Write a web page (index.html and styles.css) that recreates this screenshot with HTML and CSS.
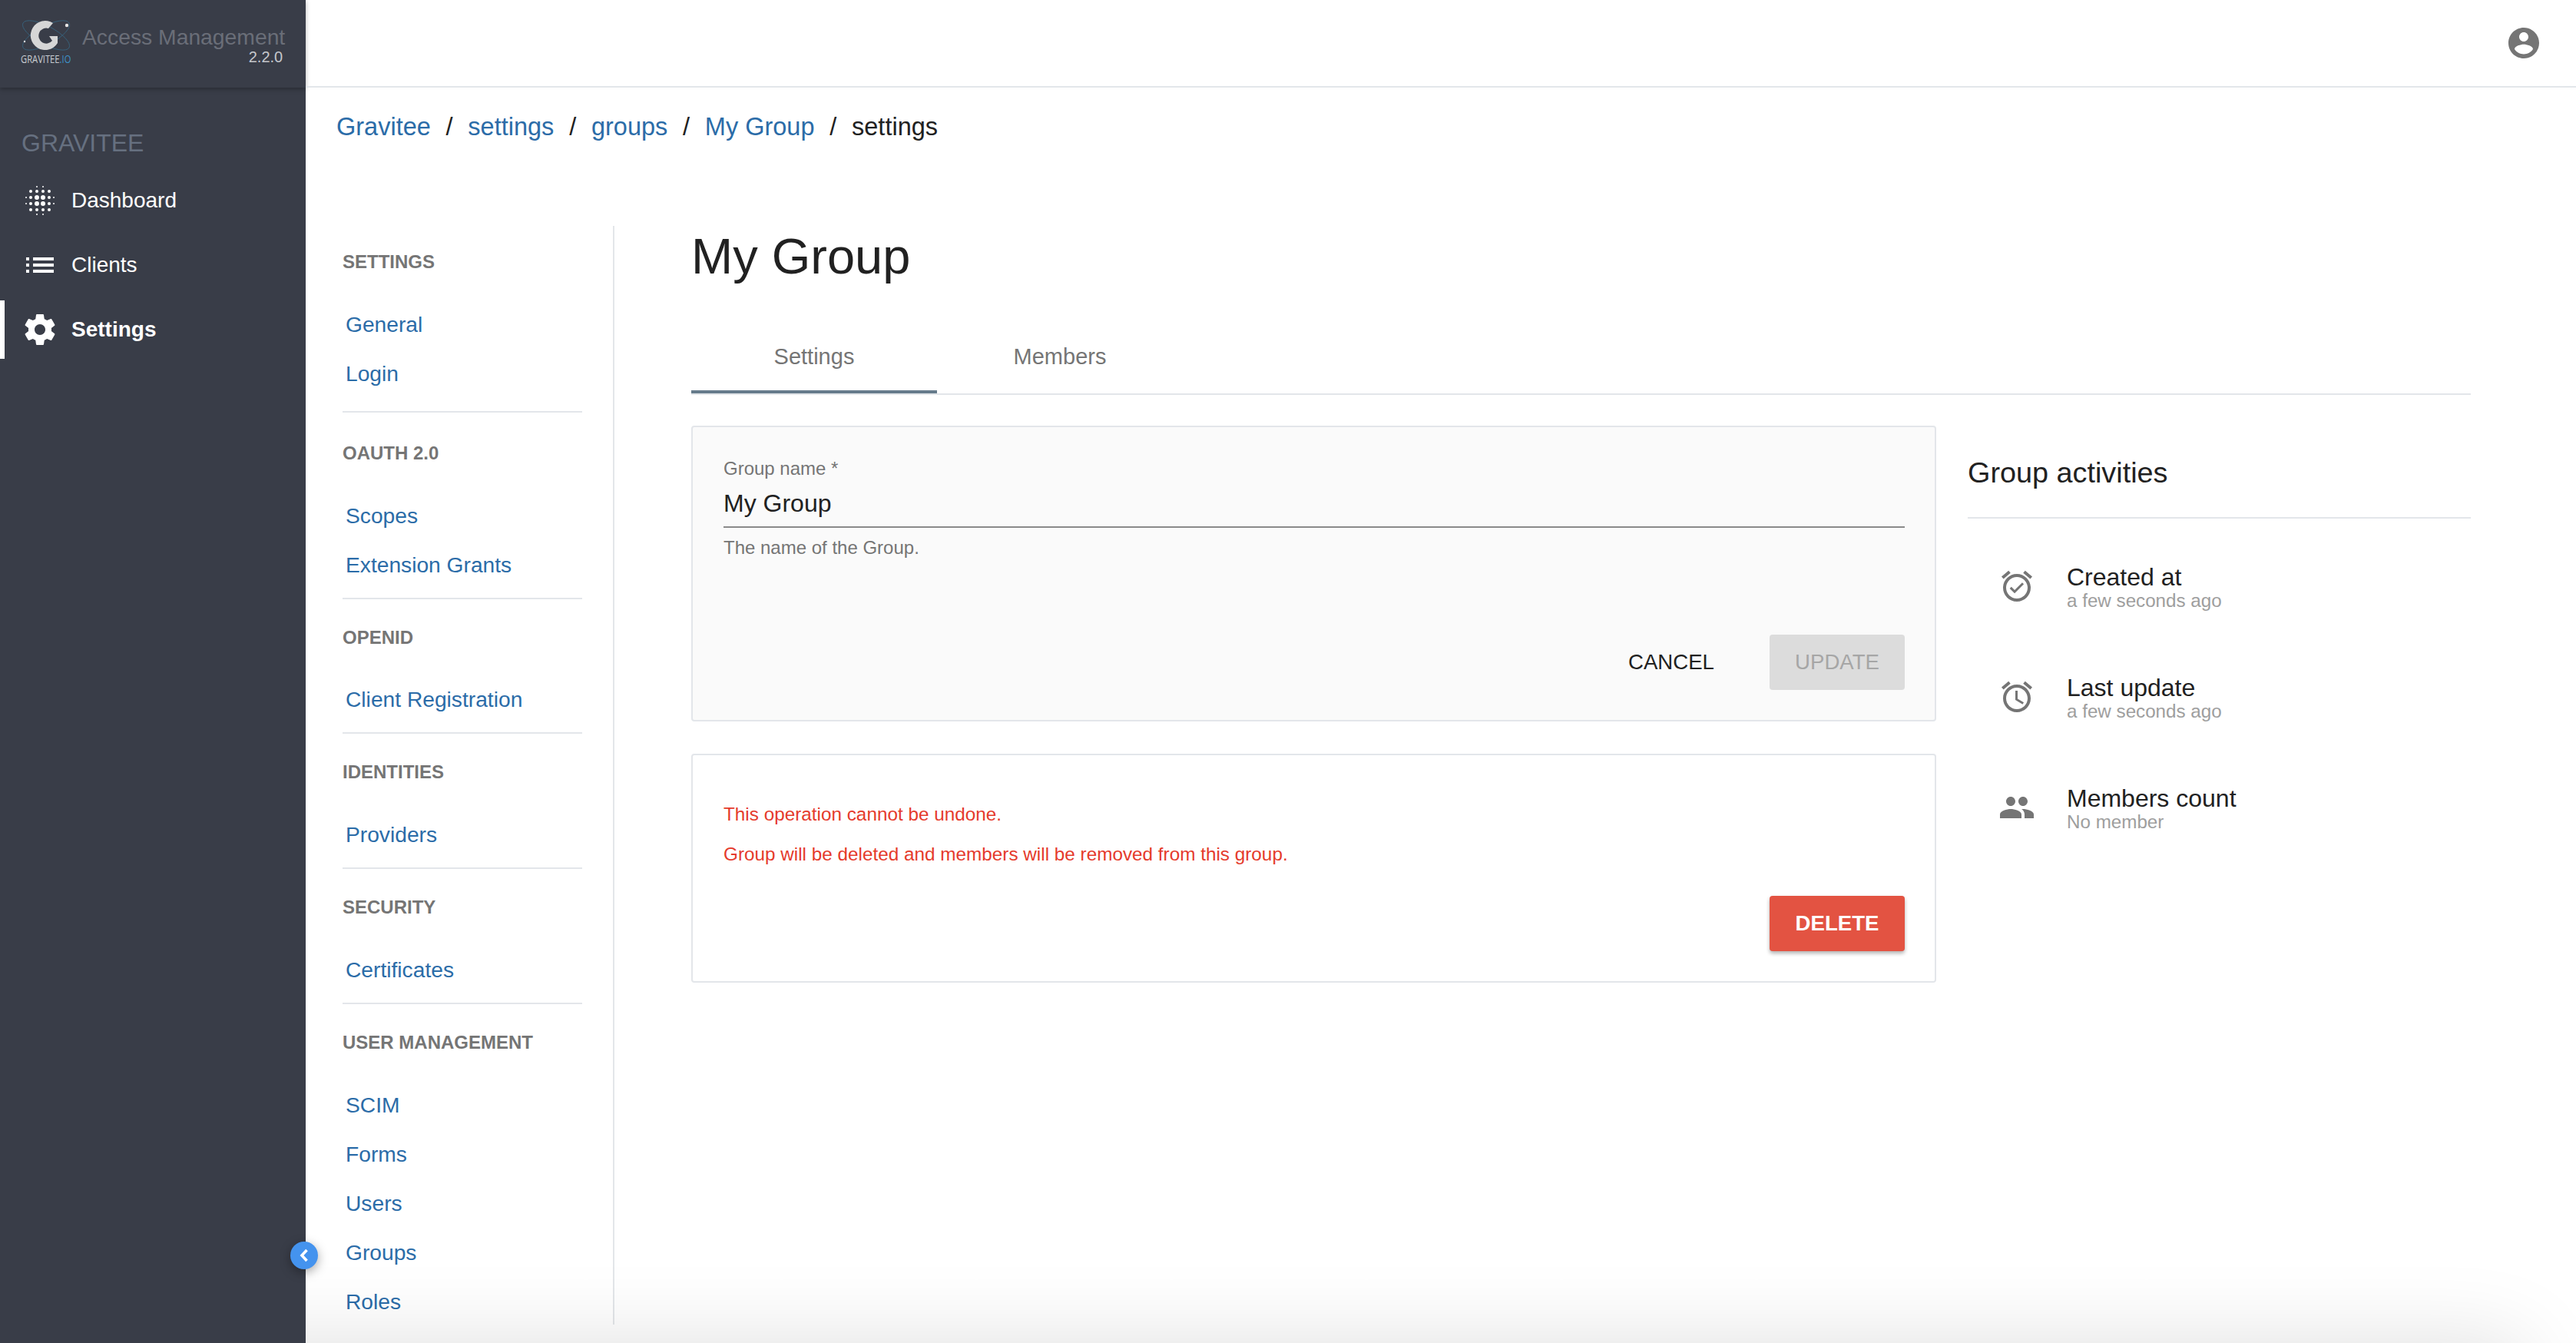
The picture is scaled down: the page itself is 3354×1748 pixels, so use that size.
FILE: index.html
```html
<!DOCTYPE html>
<html lang="en">
<head>
    <meta charset="UTF-8">
    <title>Access Management</title>
    <link rel="stylesheet" href="styles.css">
</head>
<body>
    <div class="layout">
        <div class="sidebar">
            <div class="brand">
                <div class="logo">
                    <svg class="logo-mark" viewBox="27 24 66 46" width="66" height="46">
                        <g fill="none" stroke="#37647f" stroke-width="0.8">
                            <ellipse cx="60" cy="46" rx="34" ry="12" transform="rotate(-28 60 46)"/>
                            <ellipse cx="60" cy="46" rx="34" ry="12" transform="rotate(28 60 46)"/>
                        </g>
                        <path fill="#d6d6d6" d="M69 30A19 19 0 1 0 75 56L75 47L64 47L68 53A10 10 0 1 1 63 37Z"/>
                        <circle cx="87" cy="33" r="2.2" fill="#e6e6e6"/>
                        <circle cx="32" cy="54" r="1.2" fill="#e6e6e6"/>
                    </svg>
                    <div class="logo-text">GRAVITEE<span class="logo-io">.IO</span></div>
                </div>
                <div class="product">
                    <div class="product-name">Access Management</div>
                    <div class="product-version">2.2.0</div>
                </div>
            </div>
            <div class="sidebar-title">GRAVITEE</div>
            <div class="side-nav">
                <a class="side-link" href="#">
                    <svg class="side-icon" viewBox="-4 -4 48 48" fill="#fff">
                        <circle cx="16" cy="2" r="1"/><circle cx="24" cy="2" r="1"/>
                        <circle cx="8" cy="8" r="2"/><circle cx="16" cy="8" r="2"/><circle cx="24" cy="8" r="2"/><circle cx="32" cy="8" r="2"/>
                        <circle cx="2" cy="16" r="1"/><circle cx="8" cy="16" r="2"/><circle cx="16" cy="16" r="3"/><circle cx="24" cy="16" r="3"/><circle cx="32" cy="16" r="2"/><circle cx="38" cy="16" r="1"/>
                        <circle cx="2" cy="24" r="1"/><circle cx="8" cy="24" r="2"/><circle cx="16" cy="24" r="3"/><circle cx="24" cy="24" r="3"/><circle cx="32" cy="24" r="2"/><circle cx="38" cy="24" r="1"/>
                        <circle cx="8" cy="32" r="2"/><circle cx="16" cy="32" r="2"/><circle cx="24" cy="32" r="2"/><circle cx="32" cy="32" r="2"/>
                        <circle cx="16" cy="38" r="1"/><circle cx="24" cy="38" r="1"/>
                    </svg>
                    Dashboard
                </a>
                <a class="side-link" href="#">
                    <svg class="side-icon" viewBox="-6 -14 48 48" fill="#fff">
                        <rect x="0" y="0" width="4" height="4"/><rect x="9" y="0" width="27" height="4"/>
                        <rect x="0" y="8" width="4" height="4"/><rect x="9" y="8" width="27" height="4"/>
                        <rect x="0" y="16" width="4" height="4"/><rect x="9" y="16" width="27" height="4"/>
                    </svg>
                    Clients
                </a>
                <a class="side-link side-link-active" href="#">
                    <svg class="side-icon" viewBox="0 0 24 24" fill="#fff"><path d="M19.43 12.98c.04-.32.07-.64.07-.98s-.03-.66-.07-.98l2.11-1.65c.19-.15.24-.42.12-.64l-2-3.46c-.12-.22-.39-.3-.61-.22l-2.49 1c-.52-.4-1.08-.73-1.69-.98l-.38-2.65C14.46 2.18 14.25 2 14 2h-4c-.25 0-.46.18-.49.42l-.38 2.65c-.61.25-1.17.59-1.69.98l-2.49-1c-.23-.09-.49 0-.61.22l-2 3.46c-.13.22-.07.49.12.64l2.11 1.65c-.04.32-.07.65-.07.98s.03.66.07.98l-2.11 1.65c-.19.15-.24.42-.12.64l2 3.46c.12.22.39.3.61.22l2.49-1c.52.4 1.08.73 1.69.98l.38 2.65c.03.24.24.42.49.42h4c.25 0 .46-.18.49-.42l.38-2.65c.61-.25 1.17-.59 1.69-.98l2.49 1c.23.09.49 0 .61-.22l2-3.46c.12-.22.07-.49-.12-.64l-2.11-1.65zM12 15.5c-1.93 0-3.5-1.57-3.5-3.5s1.57-3.5 3.5-3.5 3.5 1.57 3.5 3.5-1.57 3.5-3.5 3.5z"/></svg>
                    Settings
                </a>
            </div>
        </div>

        <div class="main">
            <div class="topbar">
                <svg class="account-icon" viewBox="0 0 24 24" fill="#757575"><path d="M12 2C6.48 2 2 6.48 2 12s4.48 10 10 10 10-4.48 10-10S17.52 2 12 2zm0 3c1.66 0 3 1.34 3 3s-1.34 3-3 3-3-1.34-3-3 1.34-3 3-3zm0 14.2c-2.5 0-4.71-1.28-6-3.22.03-1.99 4-3.08 6-3.08 1.99 0 5.97 1.09 6 3.08-1.29 1.94-3.5 3.22-6 3.22z"/></svg>
            </div>
            <div class="breadcrumb">
                <a href="#">Gravitee</a><span class="crumb-sep">/</span><a href="#">settings</a><span class="crumb-sep">/</span><a href="#">groups</a><span class="crumb-sep">/</span><a href="#">My Group</a><span class="crumb-sep">/</span><span>settings</span>
            </div>

            <div class="page">
                <div class="submenu">
                    <div class="submenu-section submenu-section-first">
                        <div class="submenu-title">SETTINGS</div>
                        <a class="submenu-link" href="#">General</a>
                        <a class="submenu-link" href="#">Login</a>
                    </div>
                    <div class="submenu-section">
                        <div class="submenu-title">OAUTH 2.0</div>
                        <a class="submenu-link" href="#">Scopes</a>
                        <a class="submenu-link" href="#">Extension Grants</a>
                    </div>
                    <div class="submenu-section">
                        <div class="submenu-title">OPENID</div>
                        <a class="submenu-link" href="#">Client Registration</a>
                    </div>
                    <div class="submenu-section">
                        <div class="submenu-title">IDENTITIES</div>
                        <a class="submenu-link" href="#">Providers</a>
                    </div>
                    <div class="submenu-section">
                        <div class="submenu-title">SECURITY</div>
                        <a class="submenu-link" href="#">Certificates</a>
                    </div>
                    <div class="submenu-section submenu-section-last">
                        <div class="submenu-title">USER MANAGEMENT</div>
                        <a class="submenu-link" href="#">SCIM</a>
                        <a class="submenu-link" href="#">Forms</a>
                        <a class="submenu-link" href="#">Users</a>
                        <a class="submenu-link" href="#">Groups</a>
                        <a class="submenu-link" href="#">Roles</a>
                    </div>
                </div>

                <div class="content">
                    <h1 class="page-title">My Group</h1>
                    <div class="tabs">
                        <a class="tab tab-active" href="#">Settings</a>
                        <a class="tab" href="#">Members</a>
                    </div>
                    <div class="columns">
                        <div class="cards">
                            <div class="card card-form">
                                <div class="field-label">Group name *</div>
                                <div class="field-value">My Group</div>
                                <div class="field-hint">The name of the Group.</div>
                                <div class="actions">
                                    <button class="btn btn-text">CANCEL</button>
                                    <button class="btn btn-disabled">UPDATE</button>
                                </div>
                            </div>
                            <div class="card card-danger">
                                <p class="danger-text">This operation cannot be undone.</p>
                                <p class="danger-text">Group will be deleted and members will be removed from this group.</p>
                                <div class="actions actions-danger">
                                    <button class="btn btn-delete">DELETE</button>
                                </div>
                            </div>
                        </div>

                        <div class="activities">
                            <div class="activities-title">Group activities</div>
                            <div class="activity">
                                <svg class="activity-icon" viewBox="0 0 24 24" fill="#757575"><path d="M22 5.72l-4.6-3.86-1.29 1.53 4.6 3.86L22 5.72zM7.88 3.39L6.6 1.86 2 5.71l1.29 1.53 4.59-3.85zM12 4c-4.97 0-9 4.03-9 9s4.02 9 9 9c4.97 0 9-4.03 9-9s-4.03-9-9-9zm0 16c-3.86 0-7-3.14-7-7s3.14-7 7-7 7 3.14 7 7-3.14 7-7 7zm-1.46-5.47L8.41 12.4l-1.06 1.06 3.18 3.18 6-6-1.06-1.06-4.93 4.95z"/></svg>
                                <div>
                                    <div class="activity-name">Created at</div>
                                    <div class="activity-sub">a few seconds ago</div>
                                </div>
                            </div>
                            <div class="activity">
                                <svg class="activity-icon" viewBox="0 0 24 24" fill="#757575"><path d="M22 5.72l-4.6-3.86-1.29 1.53 4.6 3.86L22 5.72zM7.88 3.39L6.6 1.86 2 5.71l1.29 1.53 4.59-3.85zM12.5 8H11v6l4.75 2.85.75-1.23-4-2.37V8zM12 4c-4.97 0-9 4.03-9 9s4.02 9 9 9c4.97 0 9-4.03 9-9s-4.03-9-9-9zm0 16c-3.87 0-7-3.13-7-7s3.13-7 7-7 7 3.13 7 7-3.13 7-7 7z"/></svg>
                                <div>
                                    <div class="activity-name">Last update</div>
                                    <div class="activity-sub">a few seconds ago</div>
                                </div>
                            </div>
                            <div class="activity">
                                <svg class="activity-icon" viewBox="0 0 24 24" fill="#757575"><path d="M16 11c1.66 0 2.99-1.34 2.99-3S17.66 5 16 5c-1.66 0-3 1.34-3 3s1.34 3 3 3zm-8 0c1.66 0 2.99-1.34 2.99-3S9.66 5 8 5C6.34 5 5 6.34 5 8s1.34 3 3 3zm0 2c-2.33 0-7 1.17-7 3.5V19h14v-2.5c0-2.33-4.67-3.5-7-3.5zm8 0c-.29 0-.62.02-.97.05 1.16.84 1.97 1.97 1.97 3.45V19h6v-2.5c0-2.33-4.67-3.5-7-3.5z"/></svg>
                                <div>
                                    <div class="activity-name">Members count</div>
                                    <div class="activity-sub">No member</div>
                                </div>
                            </div>
                        </div>
                    </div>
                </div>
            </div>
            <div class="bottom-shadow"></div>
        </div>

        <button class="collapse-btn">
            <svg class="collapse-icon" viewBox="0 0 14 18"><path d="M10.5 2L4 9L10.5 16" fill="none" stroke="#fff" stroke-width="3.6"/></svg>
        </button>
    </div>
</body>
</html>
```

FILE: styles.css
```css
body {
    margin: 0;
    padding: 0;
    font-family: "Liberation Sans", Arial, Helvetica, sans-serif;
    color: #212121;
    background-color: #ffffff;
    overflow: hidden;
}
a {
    color: #2b6ca8;
    text-decoration: none;
}
.layout {
    position: relative;
    display: flex;
    height: 100vh;
    overflow: hidden;
}

/* left sidebar */
.sidebar {
    position: relative;
    width: 398px;
    flex-shrink: 0;
    background-color: #393d48;
}
.brand {
    position: relative;
    display: flex;
    box-sizing: border-box;
    height: 114px;
    padding: 24px 27px 0 27px;
    box-shadow: 0 2px 6px rgba(0,0,0,0.3);
}
.logo {
    width: 66px;
    margin-right: 14px;
}
.logo-mark {
    display: block;
}
.logo-text {
    margin-top: 0;
    font-family: "Open Sans", sans-serif;
    font-size: 14px;
    line-height: 14px;
    color: #c9cdd2;
    white-space: nowrap;
    transform: scaleX(0.8);
    transform-origin: left center;
}
.logo-io {
    color: #3d92c9;
}
.product {
    width: 266px;
    padding-top: 7px;
    text-align: right;
}
.product-name {
    font-size: 28.3px;
    line-height: 34px;
    color: #6a6e78;
    white-space: nowrap;
}
.product-version {
    margin-top: -3px;
    padding-right: 3px;
    font-size: 20px;
    line-height: 24px;
    color: #c5c7cc;
}
.sidebar-title {
    margin-top: 52px;
    padding-left: 28px;
    font-size: 32px;
    line-height: 40px;
    color: #667080;
}
.side-nav {
    display: flex;
    flex-direction: column;
    gap: 8px;
    margin-top: 17px;
}
.side-link {
    display: flex;
    align-items: center;
    gap: 17px;
    height: 76px;
    padding-left: 28px;
    font-size: 28px;
    color: #ffffff;
}
.side-link-active {
    font-weight: bold;
    box-shadow: inset 6px 0 0 #ffffff;
}
.side-icon {
    width: 48px;
    height: 48px;
}
.collapse-btn {
    position: absolute;
    left: 378px;
    top: 1616px;
    display: flex;
    align-items: center;
    justify-content: center;
    width: 36px;
    height: 36px;
    padding: 0;
    border: 0;
    border-radius: 50%;
    background-color: #4493ee;
    box-shadow: 0 4px 14px rgba(0,0,0,0.35);
}
.collapse-icon {
    display: block;
    flex-shrink: 0;
    width: 14px;
    height: 18px;
}

/* main area */
.main {
    position: relative;
    flex: 1;
    min-width: 0;
    overflow: hidden;
}
.topbar {
    display: flex;
    align-items: center;
    justify-content: flex-end;
    box-sizing: border-box;
    height: 114px;
    padding-right: 44px;
    border-bottom: 2px solid #e3e6ea;
}
.account-icon {
    width: 48px;
    height: 48px;
}
.breadcrumb {
    height: 180px;
    padding: 30px 0 0 40px;
    box-sizing: border-box;
    font-size: 32.5px;
    line-height: 42px;
    white-space: nowrap;
}
.crumb-sep {
    margin: 0 19.75px;
}
.page {
    display: flex;
}

/* settings sub menu */
.submenu {
    box-sizing: border-box;
    width: 402px;
    height: 1430px;
    padding: 32px 40px 0 48px;
    border-right: 2px solid #e3e6ea;
}
.submenu-section {
    display: flex;
    flex-direction: column;
    align-items: flex-start;
    padding-bottom: 11px;
    margin-bottom: 35px;
    border-bottom: 2px solid #e3e6ea;
}
.submenu-section-first {
    padding-bottom: 17px;
    margin-bottom: 38px;
}
.submenu-section-last {
    border-bottom: 0;
}
.submenu-title {
    margin-bottom: 33.8px;
    font-size: 24px;
    line-height: 30px;
    font-weight: bold;
    color: #757575;
}
.submenu-link {
    padding-left: 4px;
    font-size: 28.2px;
    line-height: 64px;
    height: 64px;
    white-space: nowrap;
}

/* right content */
.content {
    flex: 1;
    min-width: 0;
    padding: 0 137px 0 100px;
}
.page-title {
    margin: 0 0 44px 0;
    font-size: 65px;
    font-weight: normal;
    line-height: 80px;
}
.tabs {
    display: flex;
    border-bottom: 2px solid #e3e6ea;
}
.tab {
    box-sizing: border-box;
    width: 320px;
    height: 94px;
    line-height: 92px;
    text-align: center;
    font-size: 29px;
    color: #757575;
}
.tab-active {
    border-bottom: 4px solid #667b8b;
}
.columns {
    display: flex;
    gap: 41px;
    margin-top: 40px;
}
.cards {
    display: flex;
    flex-direction: column;
    gap: 42px;
    width: 1621px;
}
.card {
    box-sizing: border-box;
    padding: 39px 39px 39px 40px;
    border: 2px solid #e3e6ea;
    border-radius: 4px;
}
.card-form {
    background-color: #fafafa;
}
.field-label {
    font-size: 24px;
    line-height: 30px;
    color: #757575;
}
.field-value {
    padding: 10px 0 10px 0;
    border-bottom: 2px solid #8a8a8a;
    font-size: 32px;
    line-height: 40px;
}
.field-hint {
    margin-top: 11px;
    font-size: 24px;
    line-height: 30px;
    color: #757575;
}
.actions {
    display: flex;
    justify-content: flex-end;
    gap: 36px;
    margin-top: 98px;
}
.actions-danger {
    margin-top: 39px;
}
.btn {
    height: 72px;
    padding: 0;
    border: 0;
    border-radius: 4px;
    font-family: "Liberation Sans", Arial, Helvetica, sans-serif;
    font-size: 27.6px;
}
.btn-text {
    width: 184px;
    background: transparent;
    color: #212121;
}
.btn-disabled {
    width: 176px;
    background-color: #dcdcdc;
    color: #a6a6a6;
}
.btn-delete {
    width: 176px;
    background-color: #e35342;
    color: #ffffff;
    font-weight: bold;
    box-shadow: 0 3px 5px rgba(0,0,0,0.3);
}
.card-danger {
    padding-top: 62px;
}
.danger-text {
    margin: 0 0 22px 0;
    font-size: 24.3px;
    line-height: 30px;
    color: #e53b2c;
}
.danger-text:last-of-type {
    margin-bottom: 0;
}
.card-danger .actions-danger {
    margin-top: 39px;
}

/* activities column */
.activities {
    flex: 1;
    min-width: 0;
    padding-top: 39px;
}
.activities-title {
    padding-bottom: 36px;
    border-bottom: 2px solid #e3e6ea;
    font-size: 37.8px;
    line-height: 44px;
}
.activity {
    display: flex;
    align-items: center;
    gap: 41px;
    margin-top: 82px;
    padding-left: 40px;
}
.activities-title + .activity {
    margin-top: 57px;
}
.activity-icon {
    width: 48px;
    height: 48px;
}
.activity-name {
    font-size: 32px;
    line-height: 38px;
}
.activity-sub {
    font-size: 24.2px;
    line-height: 24px;
    color: #9e9e9e;
}

.bottom-shadow {
    position: absolute;
    left: -200px;
    right: 69px;
    top: 100%;
    height: 300px;
    box-shadow: 0 0 110px rgba(0,0,0,0.13);
}
```
